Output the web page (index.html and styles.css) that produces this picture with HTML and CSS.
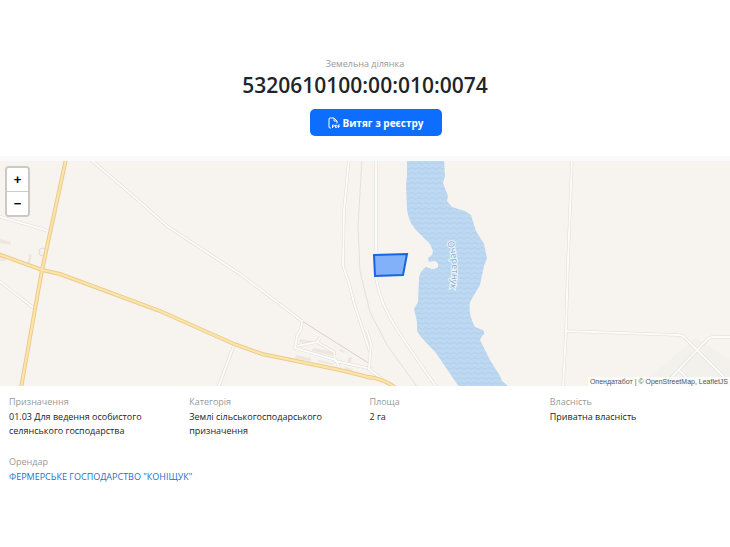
FILE: index.html
```html
<!DOCTYPE html>
<html lang="uk">
<head>
<meta charset="utf-8">
<meta name="viewport" content="width=device-width, initial-scale=1">
<title>5320610100:00:010:0074</title>
<link rel="stylesheet" href="styles.css">
</head>
<body>
<header class="hero">
  <p class="label">Земельна ділянка</p>
  <h1 class="title">5320610100:00:010:0074</h1>
  <button class="download" type="button">
    <svg class="pdf" viewBox="0 0 12 12" aria-hidden="true">
      <path d="M3 11H2Q1 11 1 10V2Q1 1 2 1H6L9 4V6.500M6 1V4H9" fill="none" stroke="#fff"/>
      <path d="M4.500 11V8H5.600Q6.500 8 6.500 8.800T5.600 9.600H4.500M7.500 8V10.600Q9.200 10.800 9.200 9.300T7.500 8M10.400 11V8H12M10.400 9.500H11.700" fill="none" stroke="#fff" stroke-width=".9"/>
    </svg>
    <span>Витяг з реєстру</span>
  </button>
</header>
<section class="map" aria-label="Карта">
  <svg class="tiles" viewBox="0 0 730 225" preserveAspectRatio="xMidYMid slice" aria-hidden="true">
    <defs>
      <pattern id="waves" width="7" height="5" patternUnits="userSpaceOnUse">
        <rect width="7" height="5" class="water"/>
        <path class="wave" d="M0 2Q1.750 4 3.500 2.500T7 2"/>
      </pattern>
      <path id="main" d="M-2 93L42 109L60 113L160 150L234 183L262 193L340 209L372 217"/>
      <path id="cross" d="M66 -2L42 109L21 227"/>
      <path id="minor" d="M90 -2L138 39L167 65L240 113L302 160M-2 55L52 71M-2 119L35 148M349 -2L344 50L343 105L349 122L354 142L370 191M376 -2V90M376 117Q380 143 398 170T437 227M572 -2L568 100L566 170L563 227M565 170L678 174Q683 174 687 179L727 219M730 176H714Q708 176 705 181L669 219M679 209L690 220M234 184L218 227M302 160Q302 169 297 175L295 187L336 199L340 209M297 185L317 181L320 177M317 181L334 191L335 200L372 208"/>
    </defs>
    <path class="field" d="M656 211L695 177L730 198V225H640z"/>
    <path class="field" d="M230 187L216 225H222L235 188z"/>
    <path class="building" d="M0 78L11 81V84L0 82zM0 95L6 97V100H0zM29 93L32 94L29 106L27 105zM300 178L312 180V183L299 181zM313 187L334 191L333 195L312 190zM296 194L311 197V200L295 198zM318 199L333 202V204L318 201zM340 188L345 190L344 192L339 190zM348 197L352 196L351 202L347 201zM345 206L353 208L352 210L345 209z"/>
    <path class="water-shape" fill="url(#waves)" d="M407 -1V15L406 24L407 49Q409 61 415 68L430 83L433 90L432 94L428 97L429 101L434 100Q439 101 438 106Q435 110 426 106Q420 110 419 117L418 141L414 148L417 161V170L421 176L436 192L459 226H509L502 220L500 215L490 199L480 179L482 175Q486 173 483 169L475 166Q468 153 470 141L480 124L484 105L487 97L484 83L476 70L471 54L465 50L452 46L447 40L448 35L443 22L445 15L444 -1z"/>
    <path class="trail" d="M362 -2L358 65L360 110L370 151L387 184L418 227"/>
    <path class="rail" d="M302 160L370 203"/>
    <circle class="loop" cx="43" cy="91" r="4"/>
    <use href="#minor" class="minor-edge"/><use href="#minor" class="minor-fill"/>
    <path class="minor-edge" d="M367 170L371 183L369 208L382 218"/>
    <path class="minor-fill" d="M367 170L371 183L369 208L382 218"/>
    <use href="#main" class="road-edge"/><use href="#cross" class="road-edge"/>
    <path class="road-edge" d="M368 216Q382 217 396 227"/>
    <use href="#main" class="road-fill"/><use href="#cross" class="road-fill"/>
    <path class="road-fill" d="M368 216Q382 217 396 227"/>
    <path id="river" d="M447 81Q456 102 449 132" fill="none"/>
    <text class="river-name"><textPath href="#river">Очеретнук</textPath></text>
    <path class="parcel" d="M374 94L407 93L403 114L375 115z"/>
  </svg>
  <div class="zoom">
    <button type="button" aria-label="Збільшити">+</button>
    <button type="button" aria-label="Зменшити">−</button>
  </div>
  <div class="credit">Опендатабот | © <a href="#">OpenStreetMap</a>, <a href="#">LeafletJS</a></div>
</section>
<dl class="facts">
  <div><dt class="label">Призначення</dt><dd>01.03 Для ведення особистого селянського господарства</dd></div>
  <div><dt class="label">Категорія</dt><dd>Землі сільськогосподарського призначення</dd></div>
  <div><dt class="label">Площа</dt><dd>2 га</dd></div>
  <div><dt class="label">Власність</dt><dd>Приватна власність</dd></div>
  <div class="wide"><dt class="label">Орендар</dt><dd><a href="#">ФЕРМЕРСЬКЕ ГОСПОДАРСТВО "КОНІЩУК"</a></dd></div>
</dl>
</body>
</html>
```
FILE: styles.css
```css
* { box-sizing: border-box; }
body {
  margin: 0;
  background: #fff;
  color: #212529;
  font-family: "Open Sans", "Noto Sans", sans-serif;
  font-size: 9px;
  line-height: 14px;
}
.hero {
  display: flex;
  flex-direction: column;
  align-items: center;
  padding: 57px 9px 20px;
}
.label { margin: 0; color: #999; }
.title {
  margin: 0 0 10px;
  font-size: 21px;
  line-height: 28px;
  font-weight: 600;
}
.download {
  display: flex;
  align-items: center;
  justify-content: center;
  gap: 2px;
  min-height: 27px;
  margin-left: 22px;
  padding: 0 18px;
  border: 0;
  border-radius: 5px;
  background: #0d6efd;
  color: #fff;
  font: 700 10px/16px "Open Sans", "Noto Sans", sans-serif;
}
.pdf { width: 12px; height: 12px; }
.map {
  position: relative;
  height: 230px;
  border-top: 5px solid #f8fafc;
  background: #f7f4ef;
}
.tiles { display: block; width: 100%; height: 100%; }
.water { fill: #bdd8f0; }
.wave { fill: none; stroke: #b1cfeb; }
.field { fill: #f3f1eb; }
.building { fill: #f0e6e0; }
.trail { fill: none; stroke: #e3e0dc; }
.rail { fill: none; stroke: #d9d0cd; }
.loop { fill: none; stroke: #dedbd7; }
.minor-edge { fill: none; stroke: #dedbd7; stroke-width: 3; }
.minor-fill { fill: none; stroke: #fcfbf8; stroke-width: 2; }
.road-edge { fill: none; stroke: #eccb86; stroke-width: 4; }
.road-fill { fill: none; stroke: #fae5ae; stroke-width: 2; }
.river-name {
  fill: #7fa9d3;
  stroke: #edf5fc;
  stroke-width: 2;
  paint-order: stroke;
  font-size: 9px;
}
.parcel { fill: rgba(51, 130, 255, .6); stroke: #1765e0; stroke-width: 2; }
.zoom {
  position: absolute;
  top: 5px;
  left: 5px;
  width: 25px;
  border: 2px solid #ccc9c5;
  border-radius: 4px;
  overflow: hidden;
}
.zoom button {
  display: block;
  width: 100%;
  height: 23px;
  padding: 0;
  border: 0;
  background: #fff;
  color: #000;
  font: 700 13px/23px "Liberation Sans", sans-serif;
}
.zoom button + button { border-top: 1px solid #ccc; height: 24px; }
.credit {
  position: absolute;
  right: 0;
  bottom: 0;
  padding: 0 2px;
  background: rgba(255, 255, 255, .7);
  color: #555;
  font: 7px/9px "Liberation Sans", sans-serif;
}
.credit a { color: inherit; text-decoration: none; }
.facts {
  display: grid;
  grid-template-columns: repeat(4, 1fr);
  row-gap: 17px;
  margin: 0;
  padding: 9px 0 0 9px;
}
.facts > div { padding-right: 24px; }
.facts dd { margin: 1px 0 0; }
.facts .wide { grid-column: 1 / -1; }
.facts a { color: #1c6fd0; text-decoration: none; }
```
